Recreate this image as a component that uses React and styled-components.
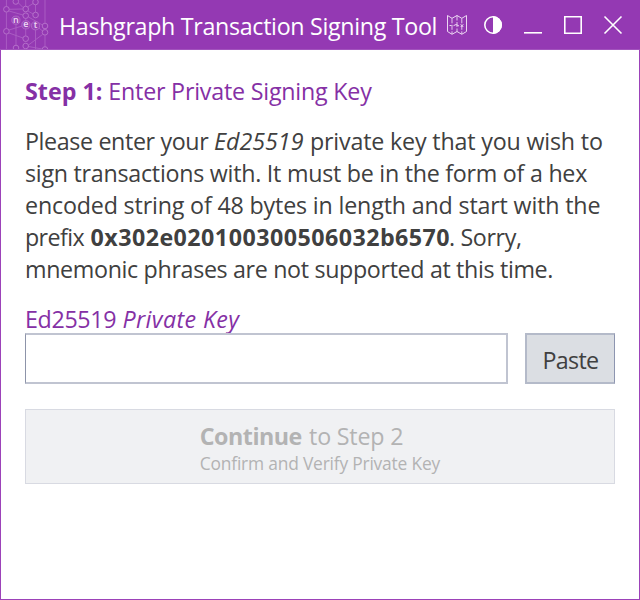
import React from "react";
import styled, { createGlobalStyle } from "styled-components";

const GlobalStyle = createGlobalStyle`
  *, *::before, *::after { box-sizing: border-box; }
  body { margin: 0; background: #fff; }
`;

const Window = styled.div`
  display: flex;
  flex-direction: column;
  width: 640px;
  height: 600px;
  overflow: hidden;
  background: #fff;
  color: #404040;
  font-family: "Open Sans", "Noto Sans", sans-serif;
  font-size: 23.25px;
  line-height: 32px;
`;

const TitleBar = styled.header`
  display: flex;
  flex: none;
  height: 50px;
  background: #9439b3;
  border-bottom: 1px solid #a253bd;
  color: #fff;
`;

const Title = styled.h1`
  flex: none;
  width: 386.8px;
  margin: 0 0 0 10px;
  font-size: 23.25px;
  font-weight: 400;
  line-height: 52px;
  letter-spacing: -0.32px;
  white-space: nowrap;
`;

const Controls = styled.div`
  display: flex;
  gap: 18px;
  padding-top: 14px;
`;

const ControlButton = styled.button`
  display: block;
  width: 22px;
  height: 22px;
  margin-right: ${(p) => (p.$tight ? "-4px" : "0")};
  padding: 0;
  border: 0;
  background: none;
  color: #fff;
  svg { display: block; }
`;

const Content = styled.main`
  flex: 1;
  padding: 25px 24px 0;
  border: solid #9c42b9;
  border-width: 0 1px 1px;
`;

const Heading = styled.h2`
  display: flex;
  margin: 0 0 19px;
  color: #8530a5;
  font-size: inherit;
  font-weight: 400;
`;

const Paragraph = styled.p`
  margin: 0;
  line-height: 31.9px;
`;

const Line = styled.span`
  display: flex;
`;

const Run = styled.span`
  flex: none;
  width: ${(p) => (p.$w ? `${p.$w}px` : "auto")};
  letter-spacing: ${(p) => p.$ls || 0}px;
  font-weight: ${(p) => (p.$bold ? 700 : 400)};
  font-style: ${(p) => (p.$italic ? "italic" : "normal")};
  white-space: pre;
`;

const Label = styled.label`
  display: flex;
  height: 30px;
  margin-top: 17.5px;
  color: #8530a5;
`;

const KeyRow = styled.div`
  display: flex;
  justify-content: space-between;
  height: 51px;
`;

const KeyInput = styled.input`
  width: 483px;
  padding: 0 10px;
  border: solid #c0c4d1;
  border-width: 2px 2px 2px 1px;
  border-left-color: #8d94a9;
  border-radius: 0;
  background: #fff;
  font: inherit;
  outline: none;
`;

const PasteButton = styled.button`
  width: 90px;
  padding: 2px 0 0;
  border: solid #b4bac9;
  border-width: 2px 1px 2px 2px;
  border-right-color: #8d95b0;
  background: #dbdee3;
  color: #404040;
  font: inherit;
  letter-spacing: -0.7px;
`;

const ContinueButton = styled.button`
  display: flex;
  flex-direction: column;
  align-items: flex-start;
  width: 590px;
  height: 75px;
  margin-top: 25px;
  padding: 10px 0 0 173.8px;
  border: 1px solid #d8dae2;
  background: #f0f1f3;
  color: #b3b3b3;
  font: inherit;
  text-align: left;
`;

const Caption = styled.span`
  margin-top: -1px;
  font-size: 17.4px;
  line-height: 24px;
  letter-spacing: -0.2px;
`;

const LogoText = styled.text`
  fill: #eed9f4;
  font: 600 9px "Open Sans", sans-serif;
  text-anchor: middle;
`;

const nodes = [
  [15.8, 1.5], [35.5, 2], [6.4, 9.3], [25.7, 9], [25.7, 15.7], [35.6, 15],
  [45, 26], [45, 32.3], [6.4, 31.3], [25.7, 38.7], [25.7, 46], [16, 48], [45, 49.5],
];
const letters = [["n", 15.9, 20.2], ["e", 25.9, 24.8], ["t", 35.5, 25.8]];

function Logo() {
  return (
    <svg width="49" height="49" viewBox="0 0 49 49">
      <path
        d="M6.4 0V6.3M6.4 12.3V28.3M6.4 34.3V49M45 0V23M45 35.3V46.5M35.5 5V12M35.5 30V49M25.7 18.7V21M25.7 29V35.7M16 24V45M25.7 0V6M18.5 3L23 7.5M9.4 9.3L22.7 9M9 11L23 15M28 11L33 14M28.5 17L42.5 25M9 30L22 26M9 33L23 38M28.5 45L42.5 34.5M28.5 46.5L42 49M27.8 6.8L33 3.5M39 28L42.5 31"
        fill="none" stroke="#ac60c4" strokeWidth=".9"
      />
      {nodes.map(([x, y]) => (
        <circle key={`${x}-${y}`} cx={x} cy={y} r="2.8" fill="none" stroke="#b875cc" strokeWidth=".9" />
      ))}
      {letters.map(([c, x, y]) => (
        <g key={c}>
          <circle cx={x} cy={y} r="4.1" fill="#9a45b7" stroke="#b06ac6" strokeWidth=".9" />
          <LogoText x={x} y={y + 2.6}>{c}</LogoText>
        </g>
      ))}
    </svg>
  );
}

function MapIcon() {
  return (
    <svg width="22" height="22" viewBox="0 0 22 22" fill="none" stroke="#ecd7f2" strokeWidth="1">
      <path d="M1.5 1.5L6 4.3L11 1.5L15.8 4.3L20.5 1.5V17.5L15.8 20.3L11 17.5L6 20.3L1.5 17.5Z" />
      <path d="M6 4.3V20M11 1.5V17.5M15.8 4.3V20" strokeDasharray="5 1.5" strokeWidth=".9" />
      <path d="M3.5 11.5H5.5M7.5 11.7L10 10.5L13 12M14.7 10.3L17.3 13M17.3 10.3L14.7 13" />
    </svg>
  );
}

function ContrastIcon() {
  return (
    <svg width="22" height="22" viewBox="0 0 22 22">
      <circle cx="11" cy="11" r="8.2" fill="none" stroke="currentColor" strokeWidth="1.6" />
      <path d="M11 2A9 9 0 0 1 11 20Z" fill="currentColor" />
    </svg>
  );
}

function WindowIcon({ d }) {
  return (
    <svg width="22" height="22" viewBox="0 0 22 22">
      <path d={d} fill="none" stroke="currentColor" strokeWidth="1.6" />
    </svg>
  );
}

export default function App() {
  return (
    <Window>
      <GlobalStyle />
      <TitleBar>
        <Logo />
        <Title>Hashgraph Transaction Signing Tool</Title>
        <Controls>
          <ControlButton $tight aria-label="Network"><MapIcon /></ControlButton>
          <ControlButton aria-label="Theme"><ContrastIcon /></ControlButton>
          <ControlButton aria-label="Minimize"><WindowIcon d="M2 18.8H20" /></ControlButton>
          <ControlButton aria-label="Maximize"><WindowIcon d="M2.8 2.8H19.2V19.2H2.8Z" /></ControlButton>
          <ControlButton aria-label="Close"><WindowIcon d="M2.5 2.5L19.5 19.5M19.5 2.5L2.5 19.5" /></ControlButton>
        </Controls>
      </TitleBar>
      <Content>
        <Heading>
          <Run $bold $w={83.3}>Step 1: </Run>
          <Run $ls={-0.21}>Enter Private Signing Key</Run>
        </Heading>
        <Paragraph>
          <Line>
            <Run $ls={-0.37} $w={189}>Please enter your </Run>
            <Run $italic $w={96}>Ed25519 </Run>
            <Run $ls={-0.18}>private key that you wish to</Run>
          </Line>
          <Line><Run $ls={-0.26}>sign transactions with. It must be in the form of a hex</Run></Line>
          <Line><Run $ls={-0.17}>encoded string of 48 bytes in length and start with the</Run></Line>
          <Line>
            <Run $ls={-0.6} $w={65.5}>prefix </Run>
            <Run $bold $ls={0.46} $w={358.5}>0x302e020100300506032b6570</Run>
            <Run $ls={-0.37}>. Sorry,</Run>
          </Line>
          <Line><Run $ls={-0.34}>mnemonic phrases are not supported at this time.</Run></Line>
        </Paragraph>
        <Label htmlFor="private-key">
          <Run $ls={-0.35} $w={97.5}>Ed25519 </Run>
          <Run $italic $ls={0.38}>Private Key</Run>
        </Label>
        <KeyRow>
          <KeyInput id="private-key" />
          <PasteButton>Paste</PasteButton>
        </KeyRow>
        <ContinueButton disabled>
          <Line>
            <Run $bold $ls={-0.5} $w={109.3}>Continue </Run>
            <Run $ls={-0.2}>to Step 2</Run>
          </Line>
          <Caption>Confirm and Verify Private Key</Caption>
        </ContinueButton>
      </Content>
    </Window>
  );
}
